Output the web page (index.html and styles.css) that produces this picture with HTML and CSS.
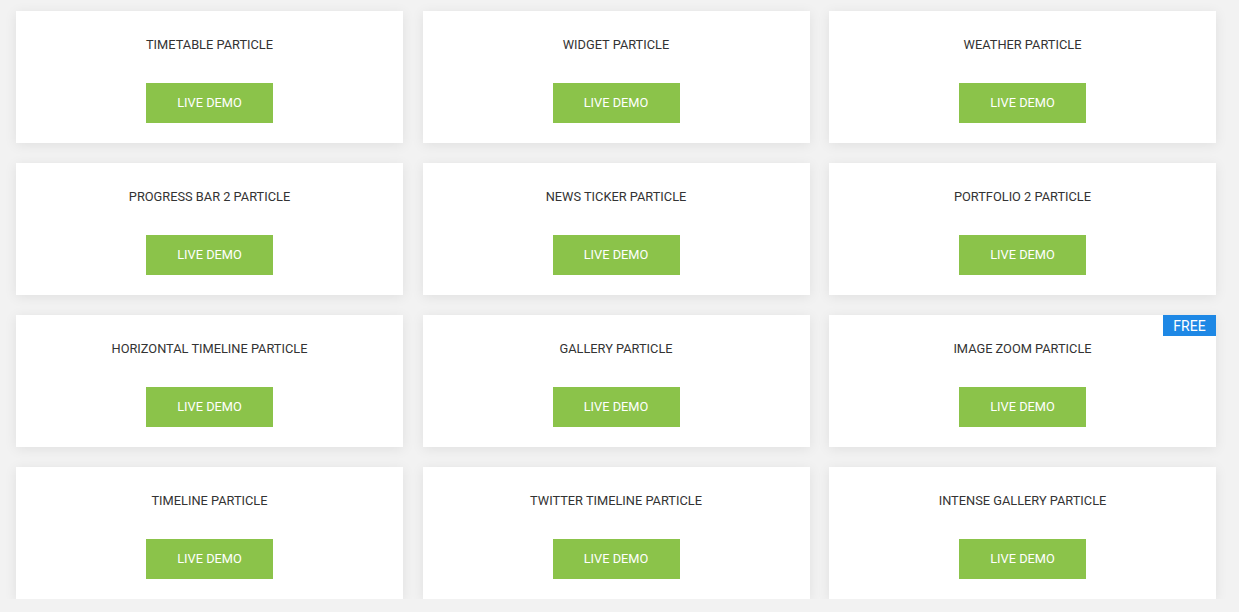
FILE: index.html
```html
<!DOCTYPE html>
<html>
<head>
<meta charset="utf-8">
<link rel="stylesheet" href="styles.css">
</head>
<body>
<div class="grid">
  <div class="card"><div class="title">TIMETABLE PARTICLE</div><a class="btn">LIVE DEMO</a></div>
  <div class="card"><div class="title">WIDGET PARTICLE</div><a class="btn">LIVE DEMO</a></div>
  <div class="card"><div class="title">WEATHER PARTICLE</div><a class="btn">LIVE DEMO</a></div>
  <div class="card"><div class="title">PROGRESS BAR 2 PARTICLE</div><a class="btn">LIVE DEMO</a></div>
  <div class="card"><div class="title">NEWS TICKER PARTICLE</div><a class="btn">LIVE DEMO</a></div>
  <div class="card"><div class="title">PORTFOLIO 2 PARTICLE</div><a class="btn">LIVE DEMO</a></div>
  <div class="card"><div class="title">HORIZONTAL TIMELINE PARTICLE</div><a class="btn">LIVE DEMO</a></div>
  <div class="card"><div class="title">GALLERY PARTICLE</div><a class="btn">LIVE DEMO</a></div>
  <div class="card"><span class="badge">FREE</span><div class="title">IMAGE ZOOM PARTICLE</div><a class="btn">LIVE DEMO</a></div>
  <div class="card"><div class="title">TIMELINE PARTICLE</div><a class="btn">LIVE DEMO</a></div>
  <div class="card"><div class="title">TWITTER TIMELINE PARTICLE</div><a class="btn">LIVE DEMO</a></div>
  <div class="card"><div class="title">INTENSE GALLERY PARTICLE</div><a class="btn">LIVE DEMO</a></div>
</div>
</body>
</html>
```
FILE: styles.css
```css
html, body {
  margin: 0;
  padding: 0;
  background: #f2f2f2;
  font-family: Roboto, "Liberation Sans", Arial, sans-serif;
}
.grid {
  padding: 11px 0 0 16px;
  display: grid;
  grid-template-columns: repeat(3, 387px);
  column-gap: 19.5px;
  row-gap: 20px;
}
.card {
  position: relative;
  background: #fff;
  height: 132px;
  box-sizing: border-box;
  padding-top: 26px;
  display: flex;
  flex-direction: column;
  align-items: center;
  box-shadow: 0 2px 12px rgba(0, 0, 0, 0.08);
}
.title {
  font-size: 12.8px;
  line-height: 15px;
  color: #333;
}
.btn {
  margin-top: 31px;
  width: 127px;
  height: 40px;
  box-sizing: border-box;
  padding-bottom: 1px;
  background: #8bc34a;
  color: #fff;
  font-size: 12.8px;
  display: flex;
  align-items: center;
  justify-content: center;
}
.badge {
  position: absolute;
  top: 0;
  right: 0;
  width: 53px;
  height: 21px;
  background: #1e88e5;
  color: #fff;
  font-size: 14px;
  display: flex;
  align-items: center;
  justify-content: center;
}
```
